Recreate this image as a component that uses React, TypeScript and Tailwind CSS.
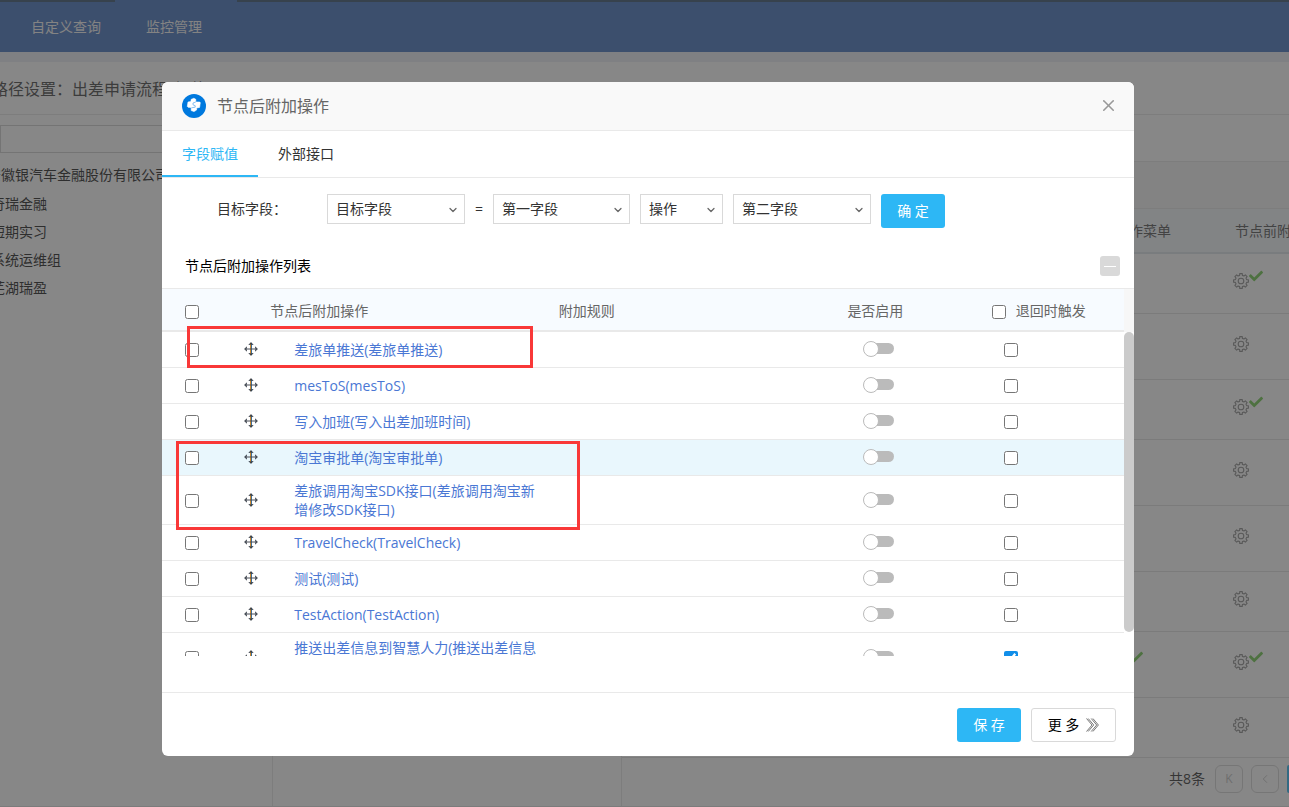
import type { ReactNode } from "react";
import { ChevronDown, ChevronLeft, X } from "lucide-react";
import { FaCheck } from "react-icons/fa";

interface Action {
  id: number;
  name: string;
  onReturn?: boolean;
  active?: boolean;
}

const navItems = ["自定义查询", "监控管理"];

const orgTree = ["奇瑞金融", "短期实习", "系统运维组", "芜湖瑞盈"];

const flowNodes = [
  { id: 1, tall: false, before: true },
  { id: 2, tall: true },
  { id: 3, tall: false, before: true },
  { id: 4, tall: true },
  { id: 5, tall: true },
  { id: 6, tall: false },
  { id: 7, tall: true, menu: true, before: true },
  { id: 8, tall: false },
];

const actions: Action[] = [
  { id: 1, name: "差旅单推送(差旅单推送)" },
  { id: 2, name: "mesToS(mesToS)" },
  { id: 3, name: "写入加班(写入出差加班时间)" },
  { id: 4, name: "淘宝审批单(淘宝审批单)", active: true },
  { id: 5, name: "差旅调用淘宝SDK接口(差旅调用淘宝新增修改SDK接口)" },
  { id: 6, name: "TravelCheck(TravelCheck)" },
  { id: 7, name: "测试(测试)" },
  { id: 8, name: "TestAction(TestAction)" },
  { id: 9, name: "推送出差信息到智慧人力(推送出差信息到智慧人力)", onReturn: true },
];

// eight square teeth around a ring
const gearPath = (() => {
  const points: string[] = [];
  for (let i = 0; i < 8; i++) {
    const base = (i * Math.PI) / 4;
    const corners = [
      [5.8, -0.24],
      [7.5, -0.17],
      [7.5, 0.17],
      [5.8, 0.24],
    ];
    for (const [r, a] of corners) {
      points.push(
        `${(8 + r * Math.cos(base + a)).toFixed(2)} ${(8 + r * Math.sin(base + a)).toFixed(2)}`
      );
    }
  }
  return `M${points.join("L")}Z`;
})();

function GearIcon() {
  return (
    <svg viewBox="0 0 16 16" className="size-4" fill="none" stroke="#8c8c8c" strokeWidth="1.1" strokeLinejoin="round">
      <path d={gearPath} />
      <circle cx="8" cy="8" r="2.8" />
    </svg>
  );
}

function MoveIcon() {
  return (
    <svg viewBox="0 0 14 14" className="size-3.5" aria-hidden="true">
      <path d="M6.500 1v12" stroke="#d08a2c" strokeWidth="1" />
      <path d="M7.500 1v12" stroke="#3d6d96" strokeWidth="1" />
      <path d="M1 7h12" stroke="#4a4f58" strokeWidth="1" />
      <path
        d="M4.800 3 7 .6 9.200 3zM4.800 11 7 13.400 9.200 11zM3 4.800.6 7 3 9.200zM11 4.800 13.400 7 11 9.200z"
        fill="#333a45"
        fillOpacity=".55"
      />
      <path
        d="M4.800 3 7 .6 9.200 3M4.800 11 7 13.400 9.200 11M3 4.800.6 7 3 9.200M11 4.800 13.400 7 11 9.200"
        fill="none"
        stroke="#2f3540"
        strokeWidth=".9"
      />
    </svg>
  );
}

function LogoIcon() {
  return (
    <svg viewBox="0 0 24 24" className="size-6" aria-hidden="true">
      <circle cx="12" cy="12" r="12" fill="#0079de" />
      <path
        d="M9 5.500 11.800 4.300 13.800 5.300V8H17.800L18.300 8.800 17.600 13.400 14.600 14V16L12 17.600 9.200 16.600V13.600L6 13.200 5.300 12.400 6 8 9 7.500Z"
        fill="#fff"
        stroke="#fff"
        strokeWidth=".6"
        strokeLinejoin="round"
      />
      <path d="M13.800 8 11 9v1.800l2.200.9v1.500L9.500 13.800" fill="none" stroke="#6db1ec" strokeWidth=".8" />
    </svg>
  );
}

interface PickerProps {
  label: string;
  className: string;
}

function Picker({ label, className }: PickerProps) {
  return (
    <div className={`relative ${className}`}>
      <select
        aria-label={label}
        className="h-[30px] w-full appearance-none border border-[#d9d9d9] bg-white pl-2 text-[#333]"
      >
        <option>{label}</option>
      </select>
      <ChevronDown
        className="pointer-events-none absolute right-1.5 top-2.5 size-3 text-[#666]"
        strokeWidth={2.5}
      />
    </div>
  );
}

function Tick({ label, checked }: { label: string; checked?: boolean }) {
  return (
    <input
      type="checkbox"
      aria-label={label}
      defaultChecked={checked}
      className="mt-0.5 block size-3.5 accent-[#118ee9]"
    />
  );
}

function Toggle({ label }: { label: string }) {
  return (
    <input
      type="checkbox"
      role="switch"
      aria-label={label}
      className="relative block h-4 w-[31px] appearance-none before:absolute before:right-0 before:top-[2px] before:h-[11px] before:w-6 before:rounded-full before:bg-[#bbb] after:absolute after:left-0 after:top-0 after:size-4 after:rounded-full after:border after:border-[#bbb] after:bg-white"
    />
  );
}

function PageButton({ label, children }: { label: string; children: ReactNode }) {
  return (
    <button
      aria-label={label}
      className="flex size-7 shrink-0 items-center justify-center rounded-md border border-[#d4d4d4] text-xs text-[#bfbfbf]"
    >
      {children}
    </button>
  );
}

function FlowPage() {
  return (
    <div className="flex h-full flex-col overflow-hidden bg-white">
      <header className="flex h-[52px] shrink-0 bg-[#4573bd]">
        <span className="w-[115px] border-t-2 border-[#37536f]" />
        <span className="w-[122px]" />
        <span className="flex-1 border-t-2 border-[#37536f]" />
        <nav className="absolute left-[31px] top-0 flex h-[54px] items-center gap-[45px]">
          {navItems.map((item) => (
            <a key={item} href="#" className="text-[#f4f4f4]">
              {item}
            </a>
          ))}
        </nav>
      </header>

      <div className="h-2.5 shrink-0 bg-[#ecedf5]" />

      <div className="flex h-[53px] shrink-0 items-center border-b border-[#e5e5e5] pt-0.5">
        <h1 className="-ml-2 text-base text-[#444]">路径设置：出差申请流程_智能</h1>
      </div>

      <div className="flex flex-1 border-b border-[#e0e0e0]">
        <aside className="w-[273px] shrink-0 overflow-hidden whitespace-nowrap border-r border-[#e5e5e5] pt-2.5 text-[#222]">
          <input
            aria-label="搜索"
            className="block h-7 w-[240px] border border-[#d0d0d0]"
          />
          <ul className="pt-2">
            <li className="-ml-[13px] h-[29px] leading-7">安徽银汽车金融股份有限公司</li>
            {orgTree.map((org) => (
              <li key={org} className="-ml-[9px] h-7 leading-7">
                {org}
              </li>
            ))}
          </ul>
        </aside>

        <div className="w-[349px] shrink-0 border-r border-[#e5e5e5]" />

        <section className="flex min-w-0 flex-1 flex-col overflow-hidden">
          <div className="h-[47px] shrink-0 border-b border-[#e5e5e5]" />
          <div className="h-[47px] shrink-0 border-b border-[#e5e5e5] bg-[#f6f6f6]" />
          <table className="w-[760px] table-fixed text-left">
            <thead>
              <tr className="h-11 border-b-2 border-[#dde3e8] bg-[#f2f7fb] text-[#555]">
                <th className="w-[481px]" />
                <th className="w-[120px] pl-3 font-normal">操作菜单</th>
                <th className="pl-3 font-normal">节点前附加操作</th>
              </tr>
            </thead>
            <tbody>
              {flowNodes.map((node) => (
                <tr
                  key={node.id}
                  className={node.tall ? "h-[66px] border-b border-[#e0e0e0]" : "h-[60px] border-b border-[#e0e0e0]"}
                >
                  <td />
                  {[node.menu, node.before].map((done, i) => (
                    <td key={i} className="pl-2.5 pb-1">
                      <span className="flex items-start">
                        <GearIcon />
                        {done && <FaCheck className="-mt-1 size-3.5 text-[#70c850]" />}
                      </span>
                    </td>
                  ))}
                </tr>
              ))}
            </tbody>
          </table>
          <div className="flex justify-end gap-2 pt-[7px]">
            <span className="mr-0.5 flex items-center whitespace-nowrap text-[#333]">共8条</span>
            <PageButton label="第一页">K</PageButton>
            <PageButton label="上一页">
              <ChevronLeft className="size-3.5" strokeWidth={1.5} />
            </PageButton>
            <span className="h-7 w-0.5 shrink-0 rounded-l-md bg-[#2db7f5]" />
          </div>
        </section>
      </div>
    </div>
  );
}

function ActionTable() {
  return (
    <div className="relative h-[368px] shrink-0 overflow-hidden border-t border-[#e9e9e9] pr-2.5">
      <table className="w-full table-fixed text-left">
        <colgroup>
          <col className="w-[10%]" />
          <col className="w-[30%]" />
          <col className="w-[30%]" />
          <col className="w-[15%]" />
          <col className="w-[15%]" />
        </colgroup>
        <thead>
          <tr className="h-[42px] border-b-2 border-[#e9e9e9] bg-[#f7fbff] text-[#666]">
            <th className="pl-[23px] pt-0.5">
              <Tick label="全选" />
            </th>
            <th className="pl-3 pt-0.5 font-normal">节点后附加操作</th>
            <th className="pl-3 pt-0.5 font-normal">附加规则</th>
            <th className="pl-3 pt-0.5 font-normal">是否启用</th>
            <th className="pl-3 pt-0.5 font-normal">
              <label className="flex items-center gap-2.5">
                <Tick label="退回时触发" />
                退回时触发
              </label>
            </th>
          </tr>
        </thead>
        <tbody>
          {actions.map((action) => (
            <tr
              key={action.id}
              className={
                action.active
                  ? "h-9 border-b border-[#e9e9e9] bg-[#e9f7fd]"
                  : "h-9 border-b border-[#e9e9e9]"
              }
            >
              <td className="pl-[23px]">
                <div className="flex items-center justify-between">
                  <Tick label={action.name} />
                  <MoveIcon />
                </div>
              </td>
              <td className="py-[5px] pl-9">
                <a href="#" className="block leading-[19px] text-[#4a77d4]">
                  {action.name}
                </a>
              </td>
              <td />
              <td className="pl-7">
                <Toggle label={`启用 ${action.name}`} />
              </td>
              <td className="pl-6">
                <Tick label={`退回时触发 ${action.name}`} checked={action.onReturn} />
              </td>
            </tr>
          ))}
        </tbody>
      </table>

      {/* scrollbar */}
      <div className="absolute right-0 top-0 h-[43px] w-2.5 bg-[#f7f7f7]" />
      <div className="absolute right-0 top-[43px] h-[300px] w-2.5 rounded-full bg-[#cbcbcb]" />

      {/* highlights */}
      <div className="pointer-events-none absolute left-[25px] top-[37px] h-[42px] w-[346px] border-3 border-[#f93838]" />
      <div className="pointer-events-none absolute left-3.5 top-[152px] h-[89px] w-[404px] border-3 border-[#f93838]" />
    </div>
  );
}

function ActionDialog() {
  return (
    <div
      role="dialog"
      aria-label="节点后附加操作"
      className="flex w-full flex-col overflow-hidden rounded-md bg-white"
    >
      <div className="flex h-[49px] shrink-0 items-center border-b border-[#e9e9e9] bg-[#f9f9f9] px-4">
        <div className="ml-1">
          <LogoIcon />
        </div>
        <h2 className="ml-[11px] flex-1 text-base text-[#666]">节点后附加操作</h2>
        <button aria-label="关闭" className="pb-0.5 text-[#999]">
          <X className="size-[19px]" strokeWidth={2} />
        </button>
      </div>

      <div className="flex h-[47px] shrink-0 border-b border-[#e9e9e9]">
        <button className="border-b-2 border-[#2db7f5] px-5 pt-0.5 text-[#2db7f5]">字段赋值</button>
        <button className="border-b-2 border-transparent px-5 pt-0.5 text-[#333]">外部接口</button>
      </div>

      <div className="flex items-start pl-[55px] pt-4">
        <span className="w-[110px] leading-[30px] text-[#333]">目标字段：</span>
        <Picker label="目标字段" className="w-[138px]" />
        <span className="w-7 text-center leading-[30px] text-[#333]">=</span>
        <Picker label="第一字段" className="w-[137px]" />
        <Picker label="操作" className="ml-2.5 w-[83px]" />
        <Picker label="第二字段" className="ml-2.5 w-[138px]" />
        <button className="ml-2.5 h-[34px] w-16 rounded-[3px] bg-[#2db7f5] text-white">确 定</button>
      </div>

      <div className="flex h-[60px] shrink-0 items-center justify-between pl-[23px] pr-3.5 pt-4">
        <h3 className="text-black">节点后附加操作列表</h3>
        <button
          aria-label="收起"
          className="flex size-5 items-center justify-center rounded-[3px] bg-[#d9d9d9]"
        >
          <span className="h-px w-3 bg-white" />
        </button>
      </div>

      <ActionTable />

      <div className="mt-auto flex h-16 shrink-0 items-center justify-end gap-2.5 border-t border-[#e9e9e9] pr-[18px]">
        <button className="h-[34px] w-16 rounded-[3px] bg-[#2db7f5] text-white">保 存</button>
        <button className="flex h-[34px] w-[85px] items-center justify-center gap-1.5 rounded-[3px] border border-[#d9d9d9] text-black">
          更 多
          <svg viewBox="0 0 14 14" className="size-3.5" fill="none" stroke="#555" strokeWidth=".8">
            <path d="M1.500.5 7 7l-5.500 6.500M3.200.5 8.700 7l-5.500 6.500M6.200.5l5.500 6.500-5.500 6.500M7.900.5l5.500 6.500-5.500 6.500" />
          </svg>
        </button>
      </div>
    </div>
  );
}

export default function App() {
  return (
    <div className="relative h-screen overflow-hidden font-['Open_Sans','Noto_Sans_CJK_SC',sans-serif] text-sm">
      <FlowPage />
      <div className="absolute inset-0 flex bg-[rgba(55,55,55,0.6)] pb-[51px] pl-[162px] pr-[155px] pt-[82px]">
        <ActionDialog />
      </div>
    </div>
  );
}
